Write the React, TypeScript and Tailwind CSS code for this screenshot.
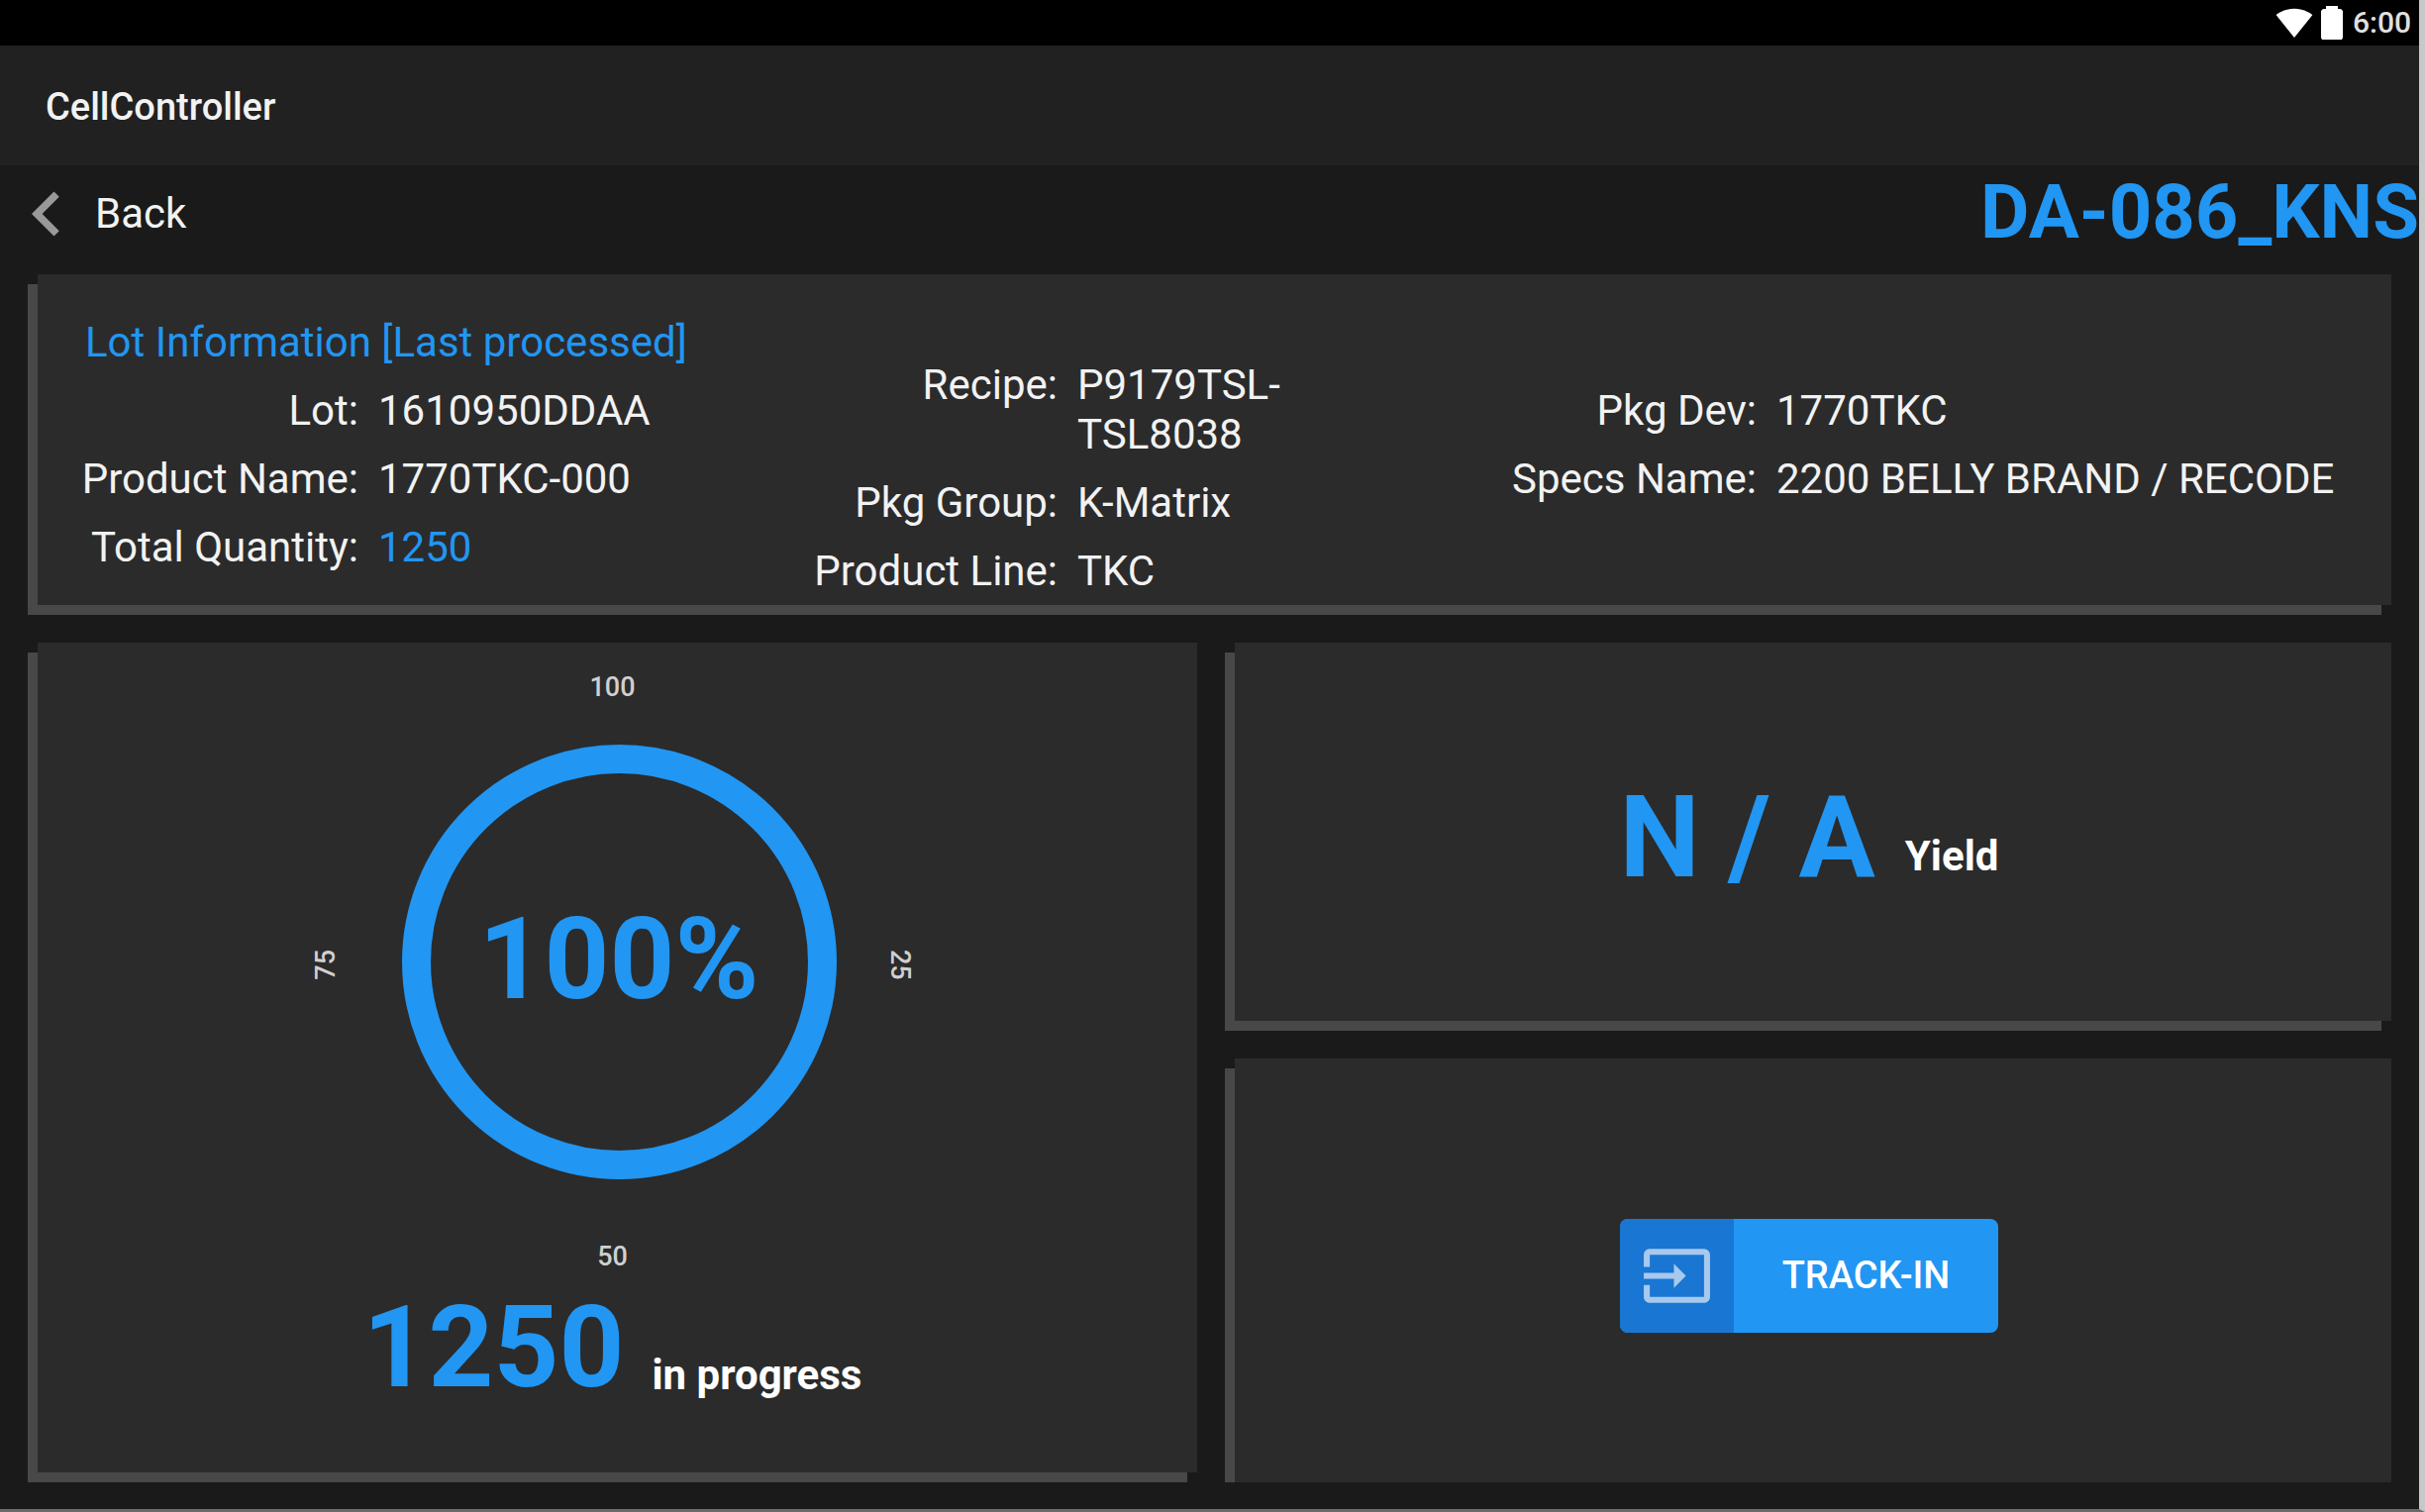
import type { ReactNode } from "react";
import { MdChevronLeft, MdInput, MdSignalWifi4Bar } from "react-icons/md";

type Field = { label: string; value: string; accent?: boolean };

const lotFields: Field[] = [
  { label: "Lot:", value: "1610950DDAA" },
  { label: "Product Name:", value: "1770TKC-000" },
  { label: "Total Quantity:", value: "1250", accent: true },
];

const recipeFields: Field[] = [
  { label: "Recipe:", value: "P9179TSL-TSL8038" },
  { label: "Pkg Group:", value: "K-Matrix" },
  { label: "Product Line:", value: "TKC" },
];

const packageFields: Field[] = [
  { label: "Pkg Dev:", value: "1770TKC" },
  { label: "Specs Name:", value: "2200 BELLY BRAND / RECODE" },
];

function Card({ className, children }: { className: string; children: ReactNode }) {
  return (
    <section className={`bg-[#2b2b2b] shadow-[-10px_10px_0_#484848] ${className}`}>
      {children}
    </section>
  );
}

function FieldList({ fields }: { fields: Field[] }) {
  return (
    <dl className="flex flex-col gap-[19px]">
      {fields.map((field) => (
        <div key={field.label} className="flex gap-5">
          <dt className="w-[324px] shrink-0 text-right">{field.label}</dt>
          <dd className={field.accent ? "text-[#2196f3]" : ""}>{field.value}</dd>
        </div>
      ))}
    </dl>
  );
}

function BatteryIcon() {
  return (
    <svg width="22" height="34" viewBox="0 0 22 34" fill="currentColor" aria-hidden="true">
      <path d="M5 0h12v3h3l2 2v27l-1 2H1l-1-2V5l2-2h3z" />
    </svg>
  );
}

function Gauge() {
  return (
    <div className="flex flex-col items-center text-[27px] leading-8 font-medium text-[#d0d0d0]">
      <span>100</span>
      <div className="mt-[42px] mb-[62px] flex items-center">
        <span className="mt-1.5 mr-[61px] rotate-180 [writing-mode:vertical-rl]">75</span>
        <div className="flex size-[439px] items-center justify-center rounded-full border-[29px] border-[#2196f3] pb-1.5">
          <span className="text-[115px] leading-[112px] font-bold text-[#2196f3]">100%</span>
        </div>
        <span className="mt-1.5 ml-12 [writing-mode:vertical-rl]">25</span>
      </div>
      <span>50</span>
    </div>
  );
}

export default function App() {
  return (
    <div className="flex min-h-screen flex-col border-r-6 border-b-3 border-r-[#c8c8c8] border-b-[#6b6b6b] bg-[#1a1a1a] font-['Roboto',sans-serif] text-[#f2f2f2]">
      <div className="flex h-[46px] items-center justify-end gap-2 bg-black pr-2 text-white">
        <MdSignalWifi4Bar size={38} aria-hidden="true" />
        <BatteryIcon />
        <span className="ml-0.5 text-[30px] leading-10 font-medium text-[#e0e0e0]">6:00</span>
      </div>

      <header className="flex h-[121px] items-center bg-[#212121] px-[46px] pt-0.5">
        <h1 className="text-[38px] leading-[48px] font-medium">CellController</h1>
      </header>

      <nav className="flex h-24 items-center justify-between">
        <button type="button" className="flex items-center gap-1 pt-0.5 pl-0.5 text-[42px] leading-[50px]">
          <MdChevronLeft size={90} className="text-[#999999]" aria-hidden="true" />
          Back
        </button>
        <h2 className="pb-0.5 text-[76px] leading-[76px] font-bold text-[#2196f3]">DA-086_KNS</h2>
      </nav>

      <main className="flex grow flex-col gap-[38px] pt-[14px] pr-7 pb-[37px] pl-[38px]">
        <Card className="grid min-h-[334px] grid-cols-[706fr_706fr_965fr] text-[42px] leading-[50px]">
          <div className="pt-11">
            <h3 className="mb-[19px] pl-12 whitespace-nowrap text-[#2196f3]">
              Lot Information [Last processed]
            </h3>
            <FieldList fields={lotFields} />
          </div>
          <div className="pt-[87px]">
            <FieldList fields={recipeFields} />
          </div>
          <div className="pt-[113px]">
            <FieldList fields={packageFields} />
          </div>
        </Card>

        <div className="grid grow grid-cols-[1171fr_1168fr] gap-[38px]">
          <Card className="flex flex-col items-center pt-[29px] pr-[10px]">
            <Gauge />
            <p className="mt-5 flex items-end gap-7 font-bold">
              <span className="text-[115px] leading-[112px] text-[#2196f3]">1250</span>
              <span className="text-[42px] leading-[56px] text-white">in progress</span>
            </p>
          </Card>

          <div className="-mb-[10px] flex flex-col gap-[38px]">
            <Card className="flex grow-[382] basis-0 items-center justify-center pr-2">
              <p className="flex items-end gap-[30px] pt-3 font-bold">
                <span className="text-[115px] leading-[112px] text-[#2196f3]">N / A</span>
                <span className="text-[42px] leading-[74px] text-white">Yield</span>
              </p>
            </Card>
            <Card className="flex grow-[428] basis-0 items-center justify-center pr-2 [clip-path:inset(0_0_0_-10px)]">
              <button
                type="button"
                className="mt-2.5 flex h-[115px] w-[382px] overflow-hidden rounded-lg bg-[#2196f3] text-[38px] leading-[48px] font-medium text-white"
              >
                <span className="flex h-full w-[115px] items-center justify-center bg-[#1976d2]">
                  <MdInput size={73} className="text-[#a7c9ee]" aria-hidden="true" />
                </span>
                <span className="flex h-full grow items-center justify-center">TRACK-IN</span>
              </button>
            </Card>
          </div>
        </div>
      </main>
    </div>
  );
}
